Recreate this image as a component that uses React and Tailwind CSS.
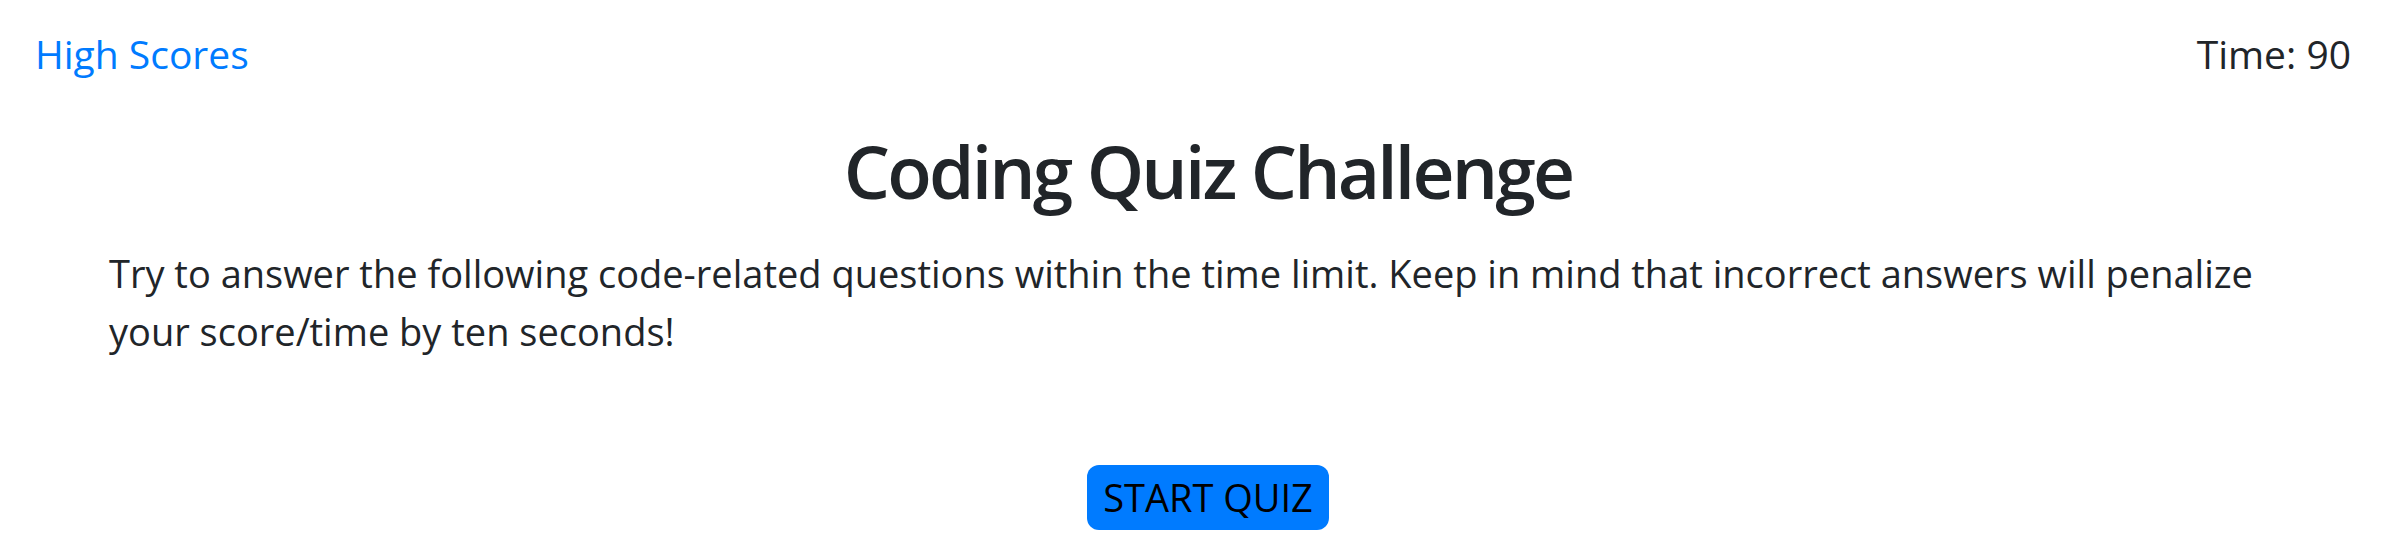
export default function App() {
  const font = { fontFamily: '"Open Sans", "Noto Sans", sans-serif' };
  return (
    <div className="min-h-[553px] bg-white text-[#212529]" style={font}>
      <header className="flex items-start justify-between pl-[35px] pr-[32px] pt-[24px]">
        <a href="#" className="text-[39px] leading-[60px] text-[#007bff]">High Scores</a>
        <div className="text-[39px] leading-[60px] text-[#212529]">Time: 90</div>
      </header>
      <main className="flex flex-col items-center pl-[109px] pr-[76px]">
        <h1 className="mt-[42px] text-[73px] font-semibold leading-[90px] tracking-[-2.8px]">Coding Quiz Challenge</h1>
        <p className="mt-[28px] w-full text-[38px] leading-[58px]">
          Try to answer the following code-related questions within the time limit. Keep in mind that incorrect answers will penalize your score/time by ten seconds!
        </p>
        <button className="mt-[105px] h-[65px] rounded-[12px] bg-[#007bff] px-[16px] text-[38px] leading-[65px] text-black">START QUIZ</button>
      </main>
    </div>
  );
}
